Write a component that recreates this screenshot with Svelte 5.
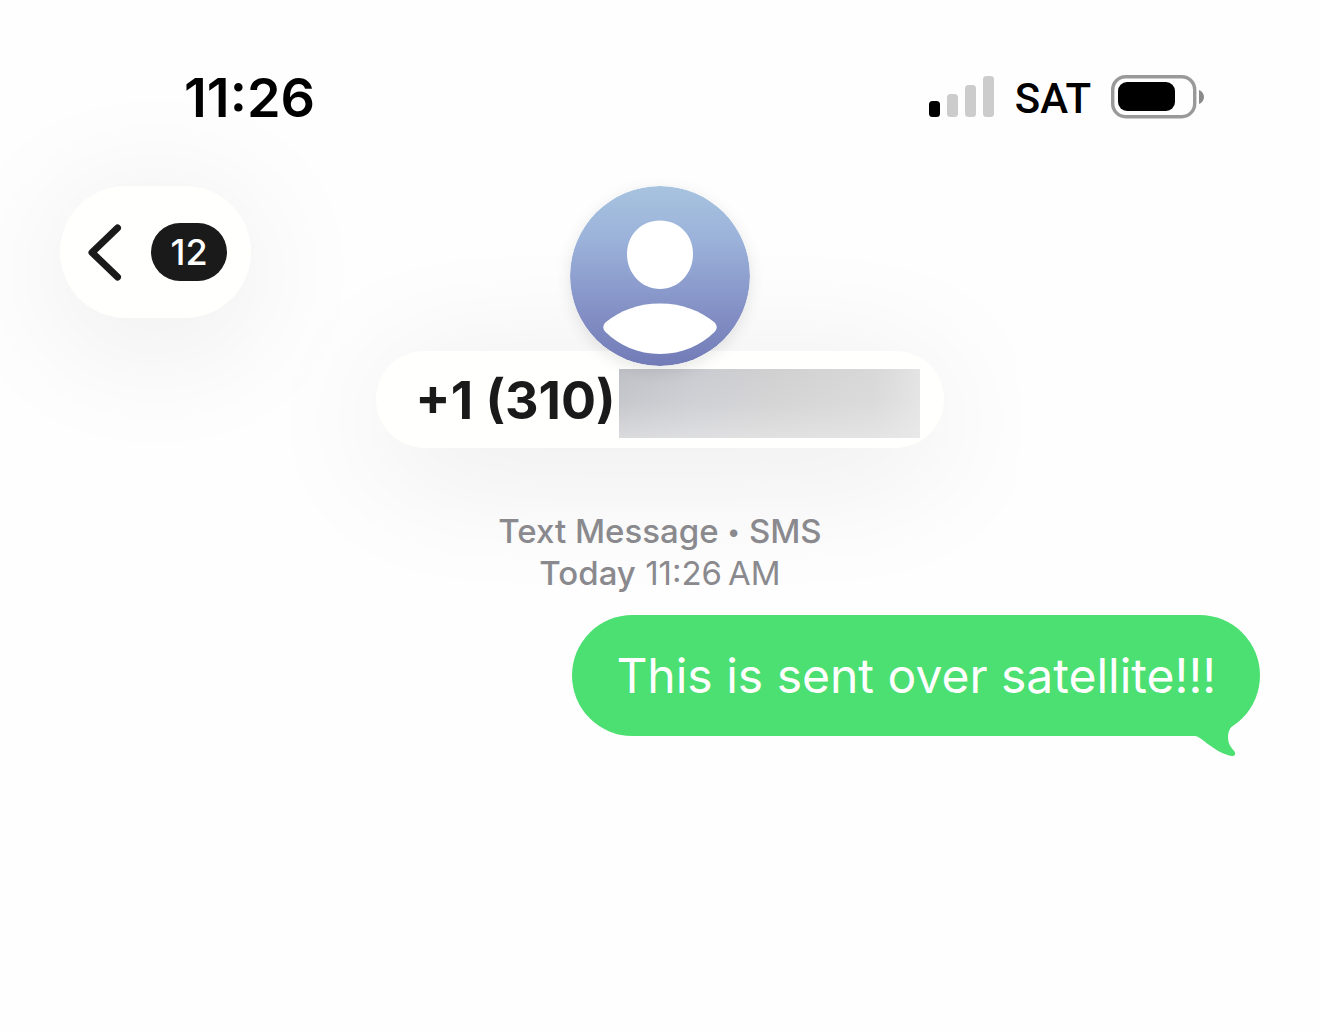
<script lang="ts">
	interface Message {
		id: number;
		text: string;
	}

	const time = '11:26';
	const unread = 12;
	const areaCode = '+1 (310)';
	const messages: Message[] = [{ id: 1, text: 'This is sent over satellite!!!' }];

	const strength = 1;
	const bars = [16, 23, 32, 41];
</script>

<div class="screen">
	<div class="status">
		<time class="clock">{time}</time>
		<div class="indicators">
			<svg class="signal" width="66" height="42" viewBox="0 0 66 42" aria-hidden="true">
				{#each bars as h, i (h)}
					<rect
						x={i * 18}
						y={41 - h}
						width="11"
						height={h}
						rx="3.5"
						class:on={i < strength}
					/>
				{/each}
			</svg>
			<span class="carrier">SAT</span>
			<svg class="battery" width="94" height="44" viewBox="0 0 94 44" aria-hidden="true">
				<rect x="1.700" y="1.700" width="82" height="40" rx="13" fill="none" stroke="#999" stroke-width="3.400" />
				<rect x="7" y="7" width="57" height="29" rx="9" fill="#000" />
				<path d="M88 15 C91 16 93 19 93 22 C93 25 91 28 88 29 Z" fill="#8a8a8a" />
			</svg>
		</div>
	</div>

	<header class="header">
		<button class="back" aria-label="Back, {unread} unread">
			<svg width="34" height="58" viewBox="0 0 34 58" aria-hidden="true">
				<path
					d="M29.500 5 L4 29.500 L29.500 54"
					fill="none"
					stroke="#1a1a1a"
					stroke-width="7"
					stroke-linecap="round"
					stroke-linejoin="round"
				/>
			</svg>
			<span class="badge">{unread}</span>
		</button>

		<div class="contact">
			<svg class="avatar" width="180" height="180" viewBox="0 0 180 180" aria-hidden="true">
				<defs>
					<linearGradient id="sky" x1="0" y1="0" x2="0" y2="1">
						<stop offset="0" stop-color="#a7c3df" />
						<stop offset="0.3" stop-color="#9bb2da" />
						<stop offset="0.72" stop-color="#828ec4" />
						<stop offset="1" stop-color="#727bb7" />
					</linearGradient>
				</defs>
				<circle cx="90" cy="90" r="90" fill="url(#sky)" />
				<path
					d="M90 34.500 C109 34.500 123 49 123 68 C123 88 108 103 90 103 C72 103 57 88 57 68 C57 49 71 34.500 90 34.500 Z"
					fill="#fff"
				/>
				<path
					d="M90 117.500 C113 117.500 130 125 144 136 C147.500 139 147.500 143 144.500 146 C131 159 112 168 90 168 C68 168 49 159 35.500 146 C32.500 143 32.500 139 36 136 C50 125 67 117.500 90 117.500 Z"
					fill="#fff"
				/>
			</svg>
			<button class="name">
				<span class="number">{areaCode}</span>
				<span class="redacted"></span>
			</button>
		</div>
	</header>

	<main class="thread">
		<p class="stamp">
			<span class="strong">Text Message <span class="dot">•</span> SMS</span><br />
			<span class="strong">Today</span> {time}&#8239;AM
		</p>
		{#each messages as msg (msg.id)}
			<div class="bubble">
				{msg.text}
				<svg class="tail" width="70" height="60" viewBox="0 0 70 60" aria-hidden="true">
					<path
						d="M0 36 H4 C8 36 10 38 14 41 C24 49 34 55 42 56 C45 56 46 54 44.500 51.500 C42 48 38 45 38 37 C38 29 43 24 48 20.500 C53 17 56 13 59 8 L40 0 H0 Z"
						fill="#4cdf71"
					/>
				</svg>
			</div>
		{/each}
	</main>
</div>

<style>
	:global(body) {
		margin: 0;
		background: #fefefe;
	}
	.screen {
		font-family: Inter, 'Liberation Sans', sans-serif;
		color: #000;
		overflow: hidden;
	}
	button {
		border: 0;
		font: inherit;
		color: inherit;
		cursor: pointer;
	}
	svg {
		display: block;
		flex-shrink: 0;
	}

	.status {
		display: flex;
		align-items: center;
		justify-content: space-between;
		padding: 65px 115px 0 184px;
		height: 64px;
	}
	.clock {
		font-size: 54px;
		font-weight: 600;
	}
	.indicators {
		display: flex;
		align-items: center;
		gap: 20px;
	}
	.signal rect { fill: #ccc; }
	.signal rect.on { fill: #000; }
	.carrier {
		padding-top: 4px;
		font-family: Roboto, sans-serif;
		font-size: 42px;
		font-weight: 500;
		line-height: 48px;
	}

	.header {
		display: grid;
		grid-template-columns: 1fr auto 1fr;
		align-items: start;
		padding: 57px 60px 0;
	}
	.back {
		justify-self: start;
		display: flex;
		align-items: center;
		gap: 29px;
		height: 132px;
		padding: 0 24px 0 28px;
		border-radius: 66px;
		background: #fffffe;
		box-shadow: 0 20px 140px rgba(0, 0, 0, 0.09);
	}
	.badge {
		min-width: 76px;
		border-radius: 29px;
		background: #1a1a1a;
		color: #fff;
		font-size: 36px;
		font-weight: 500;
		line-height: 58px;
		text-align: center;
	}

	.contact {
		display: flex;
		flex-direction: column;
		align-items: center;
	}
	.avatar {
		position: relative;
		border-radius: 50%;
		box-shadow: 0 4px 16px rgba(0, 0, 0, 0.1);
	}
	.name {
		display: flex;
		align-items: flex-start;
		gap: 3px;
		margin-top: -15px;
		padding: 18px 24px 10px 39px;
		border-radius: 49px;
		background: #fffffe;
		box-shadow: 0 20px 140px rgba(0, 0, 0, 0.09);
	}
	.number {
		color: #1a1a1a;
		font-size: 52px;
		font-weight: 700;
		line-height: 64px;
		white-space: nowrap;
	}
	.redacted {
		width: 301px;
		height: 69px;
		background:
			linear-gradient(to bottom, transparent, rgba(232, 232, 232, 0.2) 50%, rgba(236, 236, 236, 0.6)),
			linear-gradient(to right, #bfc0c6, #cacbd1 25%, #d0d0d1 50%, #d8d8d8 85%, #e4e4e4);
	}

	.thread {
		display: flex;
		flex-direction: column;
		align-items: flex-end;
		gap: 21px;
		padding: 62px 60px;
	}
	.stamp {
		align-self: center;
		margin: 0;
		color: #8a8a8e;
		font-size: 33px;
		line-height: 42px;
		text-align: center;
	}
	.strong { font-weight: 500; }
	.dot {
		font-size: 24px;
		line-height: 24px;
		vertical-align: 3px;
	}
	.bubble {
		position: relative;
		padding: 31px 44px 30px;
		border-radius: 61px;
		background: #4cdf71;
		color: #fff;
		font-size: 48px;
		line-height: 60px;
	}
	.tail {
		position: absolute;
		right: 0;
		bottom: -24px;
	}
</style>
